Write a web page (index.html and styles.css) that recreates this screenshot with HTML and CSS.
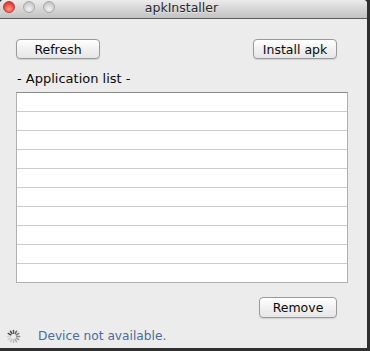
FILE: index.html
```html
<!DOCTYPE html>
<html>
<head>
<meta charset="utf-8">
<link rel="stylesheet" href="styles.css">
</head>
<body>
<div class="window">
  <div class="titlebar">
    <div class="lights">
      <span class="light red"></span>
      <span class="light"></span>
      <span class="light"></span>
    </div>
    <div class="title">apkInstaller</div>
    <div></div>
  </div>
  <div class="content">
    <div class="toolbar">
      <button class="btn btn-refresh">Refresh</button>
      <button class="btn btn-install">Install apk</button>
    </div>
    <div class="label">- Application list -</div>
    <div class="list">
      <div class="row"></div><div class="row"></div><div class="row"></div><div class="row"></div><div class="row"></div>
      <div class="row"></div><div class="row"></div><div class="row"></div><div class="row"></div><div class="row last"></div>
    </div>
    <div class="actions">
      <button class="btn btn-remove">Remove</button>
    </div>
    <div class="status">
      <svg class="spinner" width="15" height="15" viewBox="0 0 16 16">
        <g stroke-width="1.6" stroke-linecap="round">
          <line x1="8" y1="1.5" x2="8" y2="4.5" stroke="#555"/>
          <line x1="8" y1="1.5" x2="8" y2="4.5" stroke="#666" transform="rotate(30 8 8)"/>
          <line x1="8" y1="1.5" x2="8" y2="4.5" stroke="#777" transform="rotate(60 8 8)"/>
          <line x1="8" y1="1.5" x2="8" y2="4.5" stroke="#888" transform="rotate(90 8 8)"/>
          <line x1="8" y1="1.5" x2="8" y2="4.5" stroke="#999" transform="rotate(120 8 8)"/>
          <line x1="8" y1="1.5" x2="8" y2="4.5" stroke="#aaa" transform="rotate(150 8 8)"/>
          <line x1="8" y1="1.5" x2="8" y2="4.5" stroke="#bbb" transform="rotate(180 8 8)"/>
          <line x1="8" y1="1.5" x2="8" y2="4.5" stroke="#c4c4c4" transform="rotate(210 8 8)"/>
          <line x1="8" y1="1.5" x2="8" y2="4.5" stroke="#ccc" transform="rotate(240 8 8)"/>
          <line x1="8" y1="1.5" x2="8" y2="4.5" stroke="#d2d2d2" transform="rotate(270 8 8)"/>
          <line x1="8" y1="1.5" x2="8" y2="4.5" stroke="#444" transform="rotate(300 8 8)"/>
          <line x1="8" y1="1.5" x2="8" y2="4.5" stroke="#4a4a4a" transform="rotate(330 8 8)"/>
        </g>
      </svg>
      <span class="status-text">Device not available.</span>
    </div>
  </div>
</div>
</body>
</html>
```

FILE: styles.css
```css
html, body {
  margin: 0;
  padding: 0;
}
body {
  background: #2f2f2f;
  width: 370px;
  height: 351px;
  overflow: hidden;
  font-family: "DejaVu Sans", "Liberation Sans", sans-serif;
  font-size: 12px;
  color: #111;
}
.window {
  width: 367px;
  height: 348px;
  background: #ececec;
  border-radius: 4px 4px 0 0;
  overflow: hidden;
  display: flex;
  flex-direction: column;
}
.titlebar {
  height: 18px;
  border-bottom: 1px solid #5e5e5e;
  background: linear-gradient(#ebebeb, #d6d6d6 50%, #c2c2c2);
  display: grid;
  grid-template-columns: 1fr auto 1fr;
  align-items: center;
}
.lights {
  display: flex;
  gap: 8px;
  padding-left: 3px;
  margin-top: -4px;
}
.light {
  width: 12px;
  height: 12px;
  border-radius: 50%;
  box-sizing: border-box;
  border: 1px solid #a9a9a9;
  background: radial-gradient(circle at 50% 70%, #f4f4f4, #cfcfcf 60%, #b8b8b8);
}
.light.red {
  border-color: #b83a35;
  background: radial-gradient(circle at 50% 70%, #ff9a8f, #ee4d43 55%, #c22a23);
}
.title {
  font-size: 12.5px;
  color: #2a2a2a;
  margin-top: -3px;
  padding-right: 4px;
  text-shadow: 0 1px 0 rgba(255,255,255,0.5);
}
.content {
  padding: 20px 19px 0 16px;
  display: flex;
  flex-direction: column;
}
.toolbar {
  display: flex;
  justify-content: space-between;
  padding-right: 11px;
}
.btn {
  font-family: inherit;
  font-size: 12.5px;
  color: #0a0a0a;
  height: 20px;
  padding: 0;
  margin: 0;
  box-sizing: border-box;
  border: 1px solid #9a9a9a;
  border-radius: 4px;
  background: linear-gradient(#ffffff, #f1f1f1 50%, #e6e6e6);
  box-shadow: 0 1px 1px rgba(0,0,0,0.12);
  line-height: 17px;
}
.btn-refresh { width: 84px; }
.btn-install { width: 84px; }
.btn-remove { width: 78px; height: 21px; }
.label {
  margin-top: 12px;
  height: 15px;
  line-height: 15px;
  font-size: 13px;
  padding-left: 1px;
  color: #0a0a0a;
}
.list {
  margin-top: 6px;
  height: 191px;
  box-sizing: border-box;
  background: #fff;
  border: 1px solid #b0b0b0;
  border-top-color: #8a8a8a;
  display: flex;
  flex-direction: column;
}
.row {
  height: 18px;
  border-bottom: 1px solid #cbcbcb;
  flex: none;
}
.row.last {
  border-bottom: none;
  flex: 1;
}
.actions {
  display: flex;
  justify-content: flex-end;
  padding-right: 11px;
  margin-top: 14px;
}
.status {
  display: flex;
  align-items: center;
  margin-left: -10px;
  margin-top: 9px;
  height: 18px;
}
.spinner {
  flex: none;
}
.status-text {
  margin-left: 17px;
  color: #4a6c9a;
  font-size: 12.2px;
}
```
